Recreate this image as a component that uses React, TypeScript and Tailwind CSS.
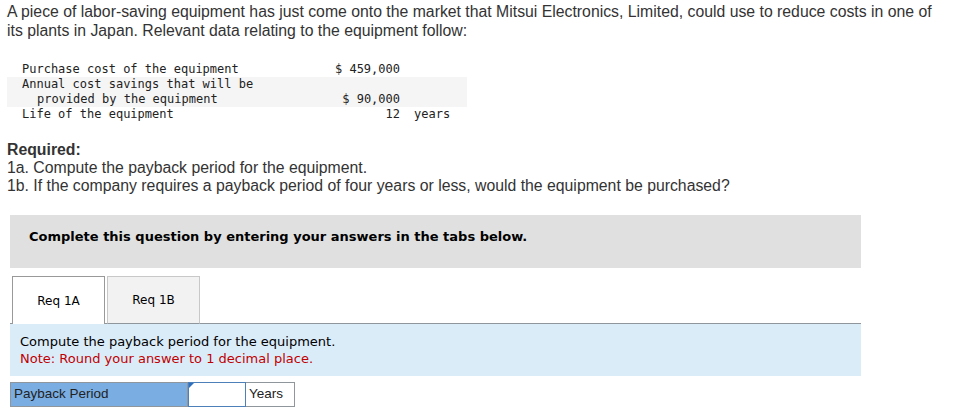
import { useState } from 'react'

const rows = [
  { label: ['Purchase cost of the equipment'], value: '$ 459,000', unit: '', shaded: false },
  { label: ['Annual cost savings that will be', 'provided by the equipment'], value: '$ 90,000', unit: '', shaded: true },
  { label: ['Life of the equipment'], value: '12', unit: 'years', shaded: false },
]

export default function App() {
  const [tab, setTab] = useState('1A')
  const [answer, setAnswer] = useState('')

  return (
    <div className="min-h-[411px] w-[975px] bg-white text-[#333]">
      <div className="px-[7px] pt-[2px] font-['Liberation_Sans',sans-serif] text-[15.8px] leading-[19px] text-[#333]">
        <p className="pr-[20px]">
          A piece of labor-saving equipment has just come onto the market that Mitsui Electronics, Limited, could use to reduce costs in one of its plants in Japan. Relevant data relating to the equipment follow:
        </p>

        {/* data table */}
        <div className="mt-[22px] w-[460px] font-['DejaVu_Sans_Mono',monospace] text-[12px] leading-[15px] text-[#222]">
          {rows.map((row) => (
            <div
              key={row.label[0]}
              className={`grid grid-cols-[313px_80px_1fr] ${row.shaded ? 'bg-[#f5f5f5]' : ''}`}
            >
              <div className="pl-[15px]">
                {row.label.map((line, i) => (
                  <div key={line} className={i > 0 ? 'pl-[15px]' : ''}>
                    {line}
                  </div>
                ))}
              </div>
              <div className="self-end text-right">{row.value}</div>
              <div className="self-end pl-[14px]">{row.unit}</div>
            </div>
          ))}
        </div>

        <div className="mt-[19px] leading-[18px]">
          <p className="font-bold">Required:</p>
          <p>1a. Compute the payback period for the equipment.</p>
          <p>1b. If the company requires a payback period of four years or less, would the equipment be purchased?</p>
        </div>
      </div>

      <div className="ml-[10px] w-[851px] font-['DejaVu_Sans',sans-serif]">
        <div className="mt-[20px] h-[53px] bg-[#e0e0e0] px-[19px] pt-[14px] text-[13px] leading-[16px] font-bold text-black">
          Complete this question by entering your answers in the tabs below.
        </div>

        {/* tabs */}
        <div className="mt-[8px] flex gap-[2px] border-b border-[#8f969c] pl-[2px]">
          {['1A', '1B'].map((t) => (
            <button
              key={t}
              onClick={() => setTab(t)}
              className={`-mb-px flex h-[48px] w-[93px] items-center justify-center border-x border-t text-[12px] text-black ${
                tab === t ? 'border-[#999] bg-white' : 'border-[#c8c8c8] border-b border-b-[#8f969c] bg-[#f2f2f2]'
              }`}
            >
              Req {t}
            </button>
          ))}
        </div>

        <div className="bg-[#dbecf9] px-[10px] pt-[9px] pb-[9px] text-[13px] leading-[17px]">
          <p className="text-black">Compute the payback period for the equipment.</p>
          <p className="text-[#c00000]">Note: Round your answer to 1 decimal place.</p>
        </div>

        <div className="mt-[6px] flex h-[25px] font-['Liberation_Sans',sans-serif] text-[13.5px] text-[#222]">
          <div className="flex w-[178px] items-center border border-[#8f969c] bg-[#7aaee3] pl-[3px]">
            Payback Period
          </div>
          <div className="relative w-[58px] border border-[#4d7fb8]">
            <span className="absolute left-0 top-0 h-0 w-0 border-t-[5px] border-r-[5px] border-t-[#2f6fc0] border-r-transparent" />
            <input
              value={answer}
              onChange={(e) => setAnswer(e.target.value)}
              className="h-full w-full bg-white px-1 text-right outline-none"
            />
          </div>
          <div className="flex w-[49px] items-center border border-[#8f969c] border-l-0 pl-[3px]">Years</div>
        </div>
      </div>
    </div>
  )
}
